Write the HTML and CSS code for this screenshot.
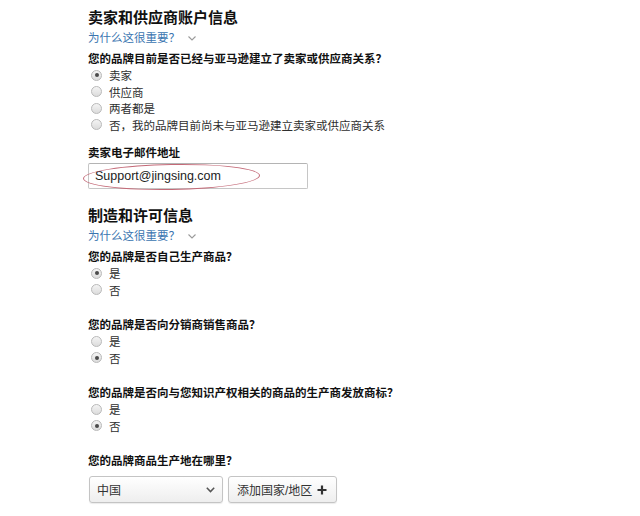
FILE: index.html
```html
<!DOCTYPE html>
<html lang="zh-CN">
<head>
<meta charset="utf-8">
<title>品牌注册信息</title>
<link rel="stylesheet" href="styles.css">
</head>
<body>
<main class="form">
  <section class="section">
    <h2 class="section-title">卖家和供应商账户信息</h2>
    <a class="why" href="#">为什么这很重要？<svg class="why-chev" width="8" height="5" viewBox="0 0 8 5"><polyline points="0.5,0.5 4,4 7.5,0.5" fill="none" stroke="#9a9a9a" stroke-width="1.1"/></svg></a>
    <div class="group">
      <p class="question">您的品牌目前是否已经与亚马逊建立了卖家或供应商关系？</p>
      <label class="option"><input type="radio" name="rel" checked>卖家</label>
      <label class="option"><input type="radio" name="rel">供应商</label>
      <label class="option"><input type="radio" name="rel">两者都是</label>
      <label class="option"><input type="radio" name="rel">否，我的品牌目前尚未与亚马逊建立卖家或供应商关系</label>
    </div>
    <div class="field">
      <p class="field-label">卖家电子邮件地址</p>
      <div class="input-wrap">
        <input class="text-input" type="text" value="Support@jingsing.com">
        <span class="mark"></span>
      </div>
    </div>
  </section>

  <section class="section section-2">
    <h2 class="section-title">制造和许可信息</h2>
    <a class="why" href="#">为什么这很重要？<svg class="why-chev" width="8" height="5" viewBox="0 0 8 5"><polyline points="0.5,0.5 4,4 7.5,0.5" fill="none" stroke="#9a9a9a" stroke-width="1.1"/></svg></a>
    <div class="group">
      <p class="question">您的品牌是否自己生产商品？</p>
      <label class="option"><input type="radio" name="q1" checked>是</label>
      <label class="option"><input type="radio" name="q1">否</label>
    </div>
    <div class="group">
      <p class="question">您的品牌是否向分销商销售商品？</p>
      <label class="option"><input type="radio" name="q2">是</label>
      <label class="option"><input type="radio" name="q2" checked>否</label>
    </div>
    <div class="group">
      <p class="question">您的品牌是否向与您知识产权相关的商品的生产商发放商标？</p>
      <label class="option"><input type="radio" name="q3">是</label>
      <label class="option"><input type="radio" name="q3" checked>否</label>
    </div>
    <div class="group">
      <p class="question">您的品牌商品生产地在哪里？</p>
      <div class="controls">
        <div class="select">
          <span>中国</span>
          <svg width="9" height="6" viewBox="0 0 9 6"><polyline points="0.8,0.8 4.5,4.6 8.2,0.8" fill="none" stroke="#555" stroke-width="1.5"/></svg>
        </div>
        <button class="add-btn" type="button">添加国家/地区<svg width="10" height="10" viewBox="0 0 10 10"><path d="M5 0.5V9.5M0.5 5H9.5" stroke="#333" stroke-width="2.2"/></svg></button>
      </div>
    </div>
  </section>
</main>
</body>
</html>
```

FILE: styles.css
```css
html, body {
  margin: 0;
  padding: 0;
  background: #ffffff;
}

body {
  font-family: "Liberation Sans", "Noto Sans CJK SC", sans-serif;
  color: #111111;
  width: 640px;
  height: 516px;
  overflow: hidden;
}

.form {
  padding: 8px 0 0 88px;
}

.section {
  display: flex;
  flex-direction: column;
  align-items: flex-start;
}

.section-title {
  margin: 0;
  font-size: 15px;
  line-height: 20px;
  font-weight: bold;
  color: #111111;
}

.why {
  display: flex;
  align-items: center;
  margin-top: 1px;
  font-size: 11.5px;
  line-height: 18px;
  color: #3a75b0;
  text-decoration: none;
}

.why-chev {
  margin-left: 8px;
}

.group {
  display: flex;
  flex-direction: column;
  align-items: flex-start;
}

.group + .group {
  margin-top: 15px;
}

.question {
  margin: 4px 0 0 0;
  font-size: 11.5px;
  line-height: 16px;
  font-weight: bold;
  color: #111111;
}

.option {
  display: flex;
  align-items: center;
  height: 16.5px;
  font-size: 11.5px;
  color: #2e2e2e;
}

.option input {
  appearance: none;
  -webkit-appearance: none;
  box-sizing: border-box;
  width: 11px;
  height: 11px;
  margin: 0 7px 0 3px;
  border: 1px solid #b9b9b9;
  border-radius: 50%;
  background: linear-gradient(#f4f4f4, #dcdcdc);
  display: flex;
  align-items: center;
  justify-content: center;
}

.option input:checked::after {
  content: "";
  width: 4px;
  height: 4px;
  border-radius: 50%;
  background: #4a4a4a;
}

.field {
  margin-top: 11px;
}

.field-label {
  margin: 0;
  font-size: 11.5px;
  line-height: 18px;
  font-weight: bold;
  color: #111111;
}

.input-wrap {
  position: relative;
  margin-top: 1px;
  width: 220px;
  height: 26px;
}

.text-input {
  box-sizing: border-box;
  width: 220px;
  height: 26px;
  margin: 0;
  padding: 0 0 0 6px;
  border: 1px solid #c6c6c6;
  border-top-color: #b4b4b4;
  border-radius: 2px;
  font-family: "Liberation Sans", sans-serif;
  font-size: 12.5px;
  color: #222222;
  background: #ffffff;
  outline: none;
}

.mark {
  position: absolute;
  left: -5px;
  top: 1px;
  width: 177px;
  height: 26px;
  box-sizing: border-box;
  border: 1px solid #c46a78;
  border-radius: 50%;
  transform: rotate(-1deg);
  pointer-events: none;
}

.section-2 {
  margin-top: 17px;
}

.controls {
  display: flex;
  gap: 5px;
  margin-top: 7px;
  margin-left: 1px;
}

.select,
.add-btn {
  box-sizing: border-box;
  height: 27px;
  display: flex;
  align-items: center;
  border: 1px solid #c4c4c4;
  border-radius: 3px;
  background: linear-gradient(#ffffff, #eeeeee);
  box-shadow: 0 1px 1px rgba(0, 0, 0, 0.08);
  font-family: "Liberation Sans", "Noto Sans CJK SC", sans-serif;
  font-size: 12px;
  color: #333333;
}

.select {
  width: 134px;
  justify-content: space-between;
  padding: 0 7px 0 7px;
}

.add-btn {
  width: 109px;
  padding: 0 9px 0 8px;
  justify-content: space-between;
  margin: 0;
}
```
